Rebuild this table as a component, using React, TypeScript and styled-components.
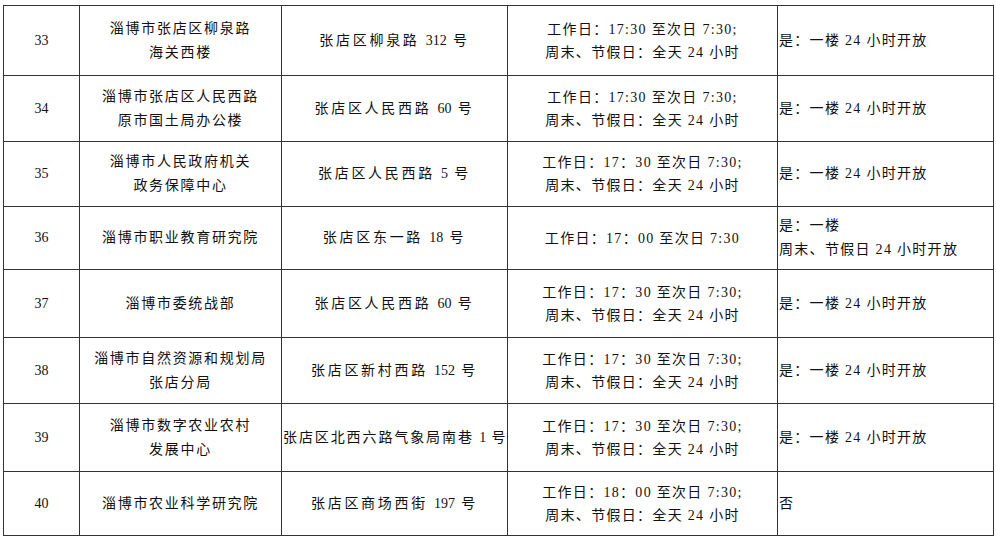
import React from "react";
import styled, { createGlobalStyle } from "styled-components";

const Global = createGlobalStyle`
  html, body { margin: 0; padding: 0; background: #fff; }
  body { font-family: "Liberation Serif", "Noto Sans CJK SC", serif; color: #111; }
`;

const Page = styled.div`
  padding: 5px 0 0 3px;
`;

const Table = styled.table`
  border-collapse: collapse;
  table-layout: fixed;
  width: 990px;
  font-size: 14px;
`;

const Row = styled.tr<{ $h: number }>`
  height: ${(p) => p.$h}px;
`;

const Cell = styled.td<{ $align?: string; $ls?: number; $lh?: number }>`
  border: 1px solid #333;
  padding: 0 1px;
  text-align: ${(p) => p.$align || "center"};
  letter-spacing: ${(p) => p.$ls ?? 0}px;
  line-height: ${(p) => p.$lh ?? 24}px;
  vertical-align: middle;
  white-space: nowrap;
  overflow: hidden;
`;

const Line = styled.div``;

const Latin = styled.span`
  letter-spacing: 0;
`;

function Spaced({ text }: { text: string }) {
  const parts = text.split(/([0-9]+)/);
  return (
    <>
      {parts.map((p, i) =>
        /^[0-9]+$/.test(p) ? <Latin key={i}>{p}</Latin> : <React.Fragment key={i}>{p}</React.Fragment>
      )}
    </>
  );
}

type R = {
  n: string;
  name: string[];
  addr: string;
  addrLs?: number;
  hours: string[];
  open: string[];
  h: number;
};

const rows: R[] = [
  { n: "33", name: ["淄博市张店区柳泉路", "海关西楼"], addr: "张店区柳泉路 312 号", hours: ["工作日：17:30 至次日 7:30;", "周末、节假日：全天 24 小时"], open: ["是：一楼 24 小时开放"], h: 70 },
  { n: "34", name: ["淄博市张店区人民西路", "原市国土局办公楼"], addr: "张店区人民西路 60 号", hours: ["工作日：17:30 至次日 7:30;", "周末、节假日：全天 24 小时"], open: ["是：一楼 24 小时开放"], h: 66 },
  { n: "35", name: ["淄博市人民政府机关", "政务保障中心"], addr: "张店区人民西路 5 号", hours: ["工作日：17：30 至次日 7:30;", "周末、节假日：全天 24 小时"], open: ["是：一楼 24 小时开放"], h: 65 },
  { n: "36", name: ["淄博市职业教育研究院"], addr: "张店区东一路 18 号", hours: ["工作日：17：00 至次日 7:30"], open: ["是：一楼", "周末、节假日 24 小时开放"], h: 63 },
  { n: "37", name: ["淄博市委统战部"], addr: "张店区人民西路 60 号", hours: ["工作日：17：30 至次日 7:30;", "周末、节假日：全天 24 小时"], open: ["是：一楼 24 小时开放"], h: 68 },
  { n: "38", name: ["淄博市自然资源和规划局", "张店分局"], addr: "张店区新村西路 152 号", hours: ["工作日：17：30 至次日 7:30;", "周末、节假日：全天 24 小时"], open: ["是：一楼 24 小时开放"], h: 66 },
  { n: "39", name: ["淄博市数字农业农村", "发展中心"], addr: "张店区北西六路气象局南巷 1 号", addrLs: 1.9, hours: ["工作日：17：30 至次日 7:30;", "周末、节假日：全天 24 小时"], open: ["是：一楼 24 小时开放"], h: 68 },
  { n: "40", name: ["淄博市农业科学研究院"], addr: "张店区商场西街 197 号", hours: ["工作日：18：00 至次日 7:30;", "周末、节假日：全天 24 小时"], open: ["否"], h: 64 },
];

export default function App() {
  return (
    <Page>
      <Global />
      <Table>
        <colgroup>
          <col style={{ width: 76 }} />
          <col style={{ width: 202 }} />
          <col style={{ width: 226 }} />
          <col style={{ width: 270 }} />
          <col style={{ width: 216 }} />
        </colgroup>
        <tbody>
          {rows.map((r) => (
            <Row key={r.n} $h={r.h}>
              <Cell>{r.n}</Cell>
              <Cell $ls={1.7}>
                {r.name.map((t) => (
                  <Line key={t}>{t}</Line>
                ))}
              </Cell>
              <Cell $ls={r.addrLs ?? 2.7}>
                <Spaced text={r.addr} />
              </Cell>
              <Cell $ls={1.3} $lh={23}>
                {r.hours.map((t) => (
                  <Line key={t}>{t}</Line>
                ))}
              </Cell>
              <Cell $align="left" $ls={1.3}>
                {r.open.map((t) => (
                  <Line key={t}>{t}</Line>
                ))}
              </Cell>
            </Row>
          ))}
        </tbody>
      </Table>
    </Page>
  );
}
